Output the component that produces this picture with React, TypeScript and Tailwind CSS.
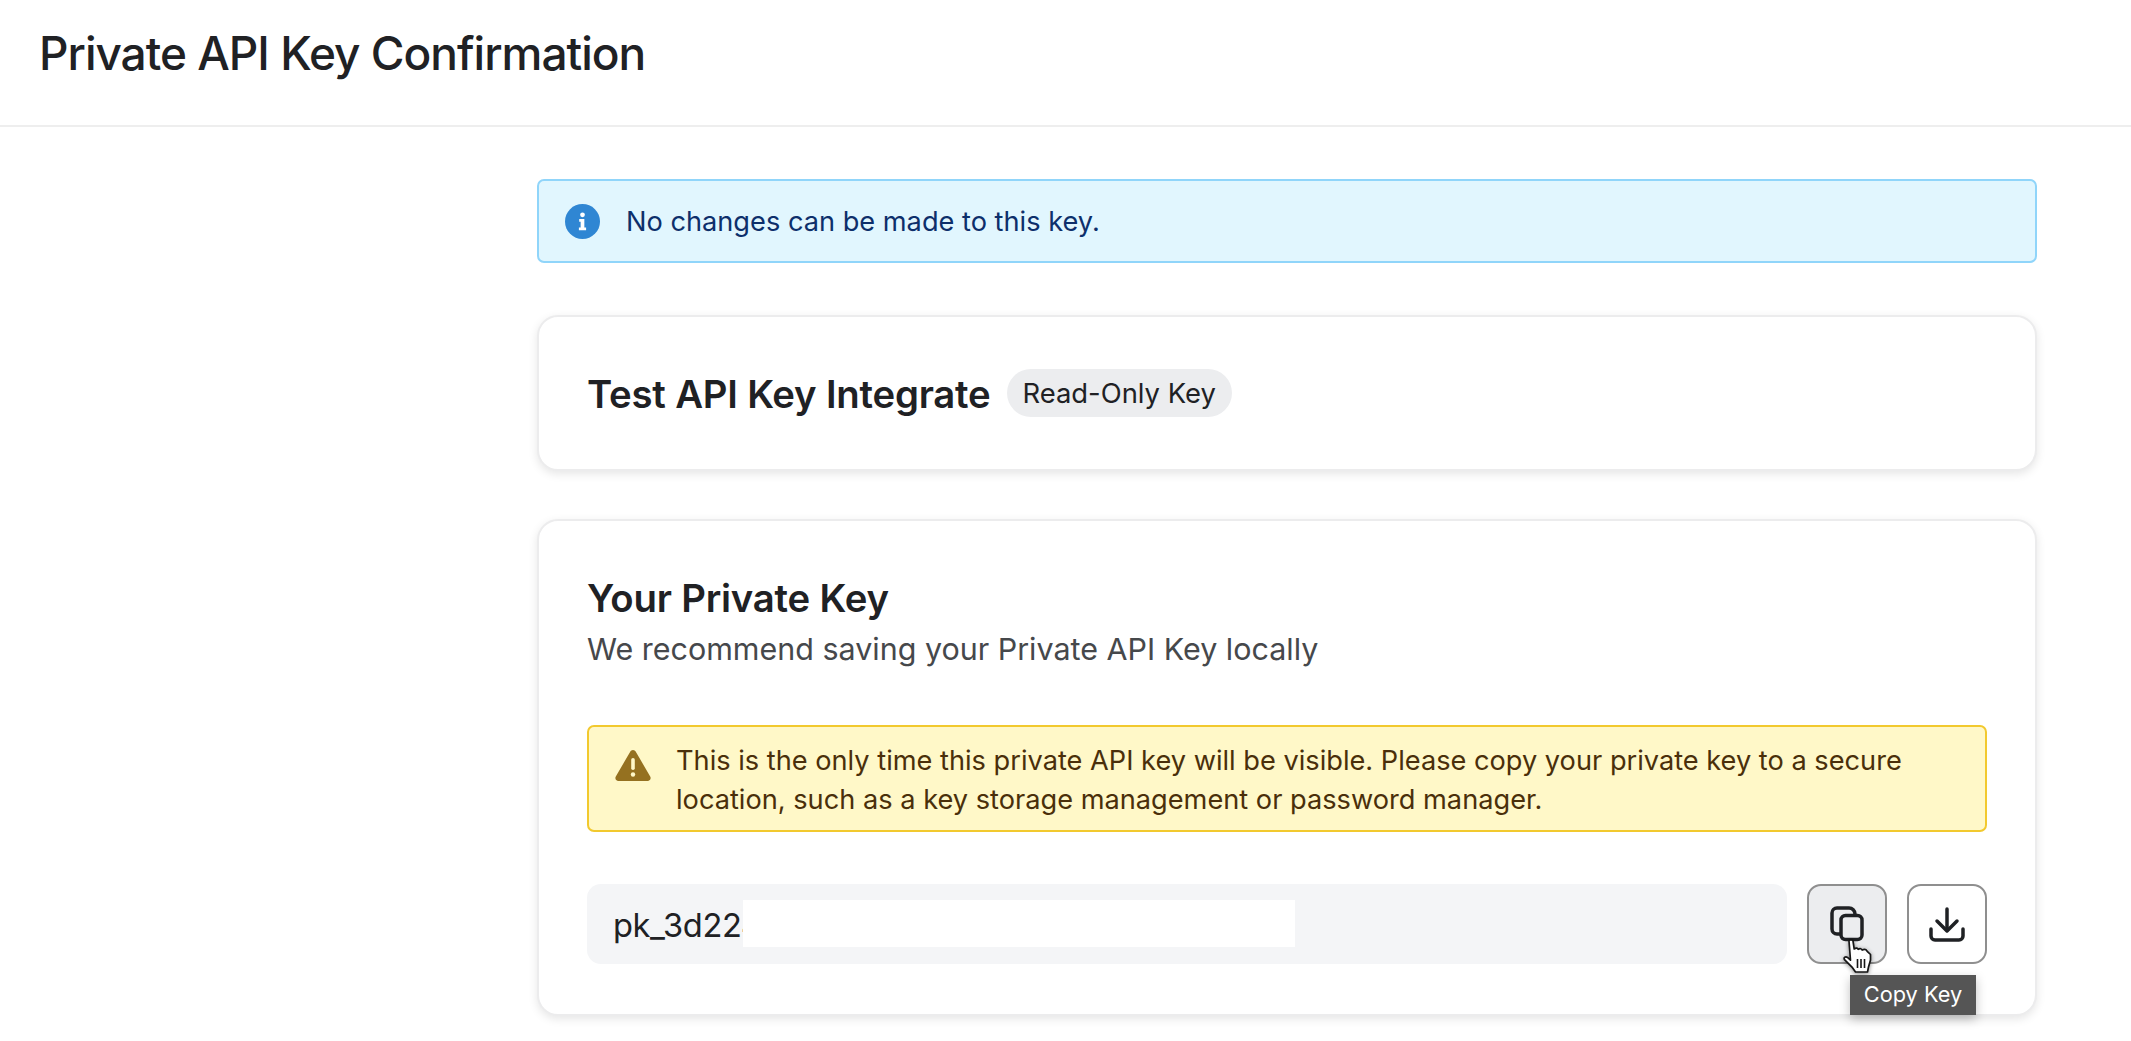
import React from "react";

function InfoIcon() {
  return (
    <svg width="35" height="35" viewBox="0 0 34 34" className="shrink-0">
      <circle cx="17" cy="17" r="17" fill="#2f86d3" />
      <circle cx="17" cy="10.5" r="2.3" fill="#fff" />
      <path d="M13.8 14.6h5v8.2h1.7v2.6h-7v-2.6h1.7v-5.6h-1.4z" fill="#fff" />
    </svg>
  );
}

function WarnIcon() {
  return (
    <svg width="36" height="32" viewBox="0 0 36 32" className="shrink-0">
      <path d="M18 1c1.2 0 2.2.7 2.8 1.8l14.4 24.6c1.2 2.1-.2 4.6-2.7 4.6H3.5C1 32-.4 29.500.8 27.400L15.200 2.800C15.800 1.700 16.800 1 18 1z" fill="#957120" />
      <rect x="16.200" y="9" width="3.600" height="12" rx="1.800" fill="#fff8c8" />
      <circle cx="18" cy="25.500" r="2.200" fill="#fff8c8" />
    </svg>
  );
}

function CopyIcon() {
  return (
    <svg width="36" height="36" viewBox="0 0 36 36" fill="none" stroke="#1f2124" strokeWidth="3.500">
      <rect x="12" y="9.500" width="21" height="24" rx="4.500" />
      <path d="M11 28H8a5 5 0 0 1-5-5V7a5 5 0 0 1 5-5h12a6 6 0 0 1 6 6" strokeLinecap="round" />
    </svg>
  );
}

function DownloadIcon() {
  return (
    <svg width="36" height="36" viewBox="0 0 36 36" fill="none" stroke="#1f2124" strokeWidth="3.500" strokeLinecap="round" strokeLinejoin="round" className="translate-y-[1px]">
      <path d="M18 2v21" />
      <path d="M8 14l10 10 10-10" />
      <path d="M2 22v7a4 4 0 0 0 4 4h24a4 4 0 0 0 4-4v-7" />
    </svg>
  );
}

function HandCursor() {
  return (
    <svg width="30" height="35" viewBox="0 0 30 35" className="absolute left-[36px] top-[55px]" style={{ filter: "drop-shadow(0 1px 2px rgba(0,0,0,.45))" }}>
      <path d="M6 2c0-1.500 4-1.500 4 0l1.200 8c2-1.600 3.300-1 4 .3 2-1.300 3.300-.5 4 .8 2-1 4-.6 5 1.200l3.300 3.200v5.500l-2 7-1 5H12.500l-3-4.300-8-8c-1.200-2.200 1-3.500 3-2.300l3 2.800z" fill="#fff" stroke="#161616" strokeWidth="1.700" strokeLinejoin="round" />
      <path d="M14.500 20v9M18 20v9M21.500 20v9" stroke="#161616" strokeWidth="1.600" />
    </svg>
  );
}

const card = "rounded-[21px] border-2 border-[#ececed] bg-white shadow-[0_3px_10px_rgba(0,0,0,0.1)]";

export default function App() {
  return (
    <div className="min-h-[1041px] overflow-hidden bg-white font-['Inter','Liberation_Sans',sans-serif] text-[#202124]">
      <header className="flex h-[127px] items-center border-b-2 border-[#eeeeee] pb-[20px] pl-[39px]">
        <h1 className="text-[46px] font-[450] leading-none tracking-[-1px]">Private API Key Confirmation</h1>
      </header>

      <main className="flex flex-col gap-[52px] pl-[537px] pr-[94px] pt-[52px]">
        <div className="flex h-[84px] items-center gap-[26px] rounded-[7px] border-2 border-[#90d5fa] bg-[#e1f6fe] pl-[26px] text-[#0d2f6b]">
          <InfoIcon />
          <span className="pt-[2px] text-[27.2px] leading-none">No changes can be made to this key.</span>
        </div>

        <section className={`${card} flex h-[156px] items-center gap-[16px] px-[48px]`}>
          <h2 className="pt-[2px] text-[38.3px] font-semibold leading-none tracking-[-0.2px]">Test API Key Integrate</h2>
          <span className="flex h-[48px] items-center rounded-full bg-[#ecedef] px-[16px] pt-[1px] text-[27.4px] leading-none">Read-Only Key</span>
        </section>

        <section className={`${card} -mt-[4px] h-[497px] px-[48px] pt-[54px]`}>
          <h2 className="text-[38.3px] font-semibold leading-[46px] tracking-[-0.2px]">Your Private Key</h2>
          <p className="mt-[8px] text-[30.46px] leading-[40px] text-[#46484b]">We recommend saving your Private API Key locally</p>

          <div className="mt-[56px] flex h-[107px] gap-[25px] rounded-[7px] border-2 border-[#f2c92e] bg-[#fff8c8] pl-[26px] pr-[40px] pt-[14px] text-[#4a2f0a]">
            <div className="pt-[8px]"><WarnIcon /></div>
            <p className="text-[27.2px] leading-[39px]">
              This is the only time this private API key will be visible. Please copy your private key to a secure location, such as a key storage management or password manager.
            </p>
          </div>

          <div className="mt-[52px] flex gap-[20px]">
            <div className="relative flex h-[80px] flex-1 items-center rounded-[14px] bg-[#f4f5f7] pl-[26px] pt-[2px] text-[32.64px] leading-none tracking-[-0.4px]">
              <span>pk_3d224</span>
              <div className="absolute left-[156px] top-[16px] h-[47px] w-[552px] bg-white" />
            </div>
            <div className="relative">
              <button className="flex h-[80px] w-[80px] items-center justify-center rounded-[14px] border-2 border-[#8f8f8f] bg-[#ecedef]">
                <CopyIcon />
              </button>
              <HandCursor />
              <div className="absolute left-[43px] top-[91px] z-10 flex h-[40px] w-[126px] items-center justify-center bg-[#555555] text-[21.76px] leading-none text-white shadow-[0_4px_10px_rgba(0,0,0,0.25)]">
                Copy Key
              </div>
            </div>
            <button className="flex h-[80px] w-[80px] items-center justify-center rounded-[14px] border-2 border-[#8f8f8f] bg-white">
              <DownloadIcon />
            </button>
          </div>
        </section>
      </main>
    </div>
  );
}
